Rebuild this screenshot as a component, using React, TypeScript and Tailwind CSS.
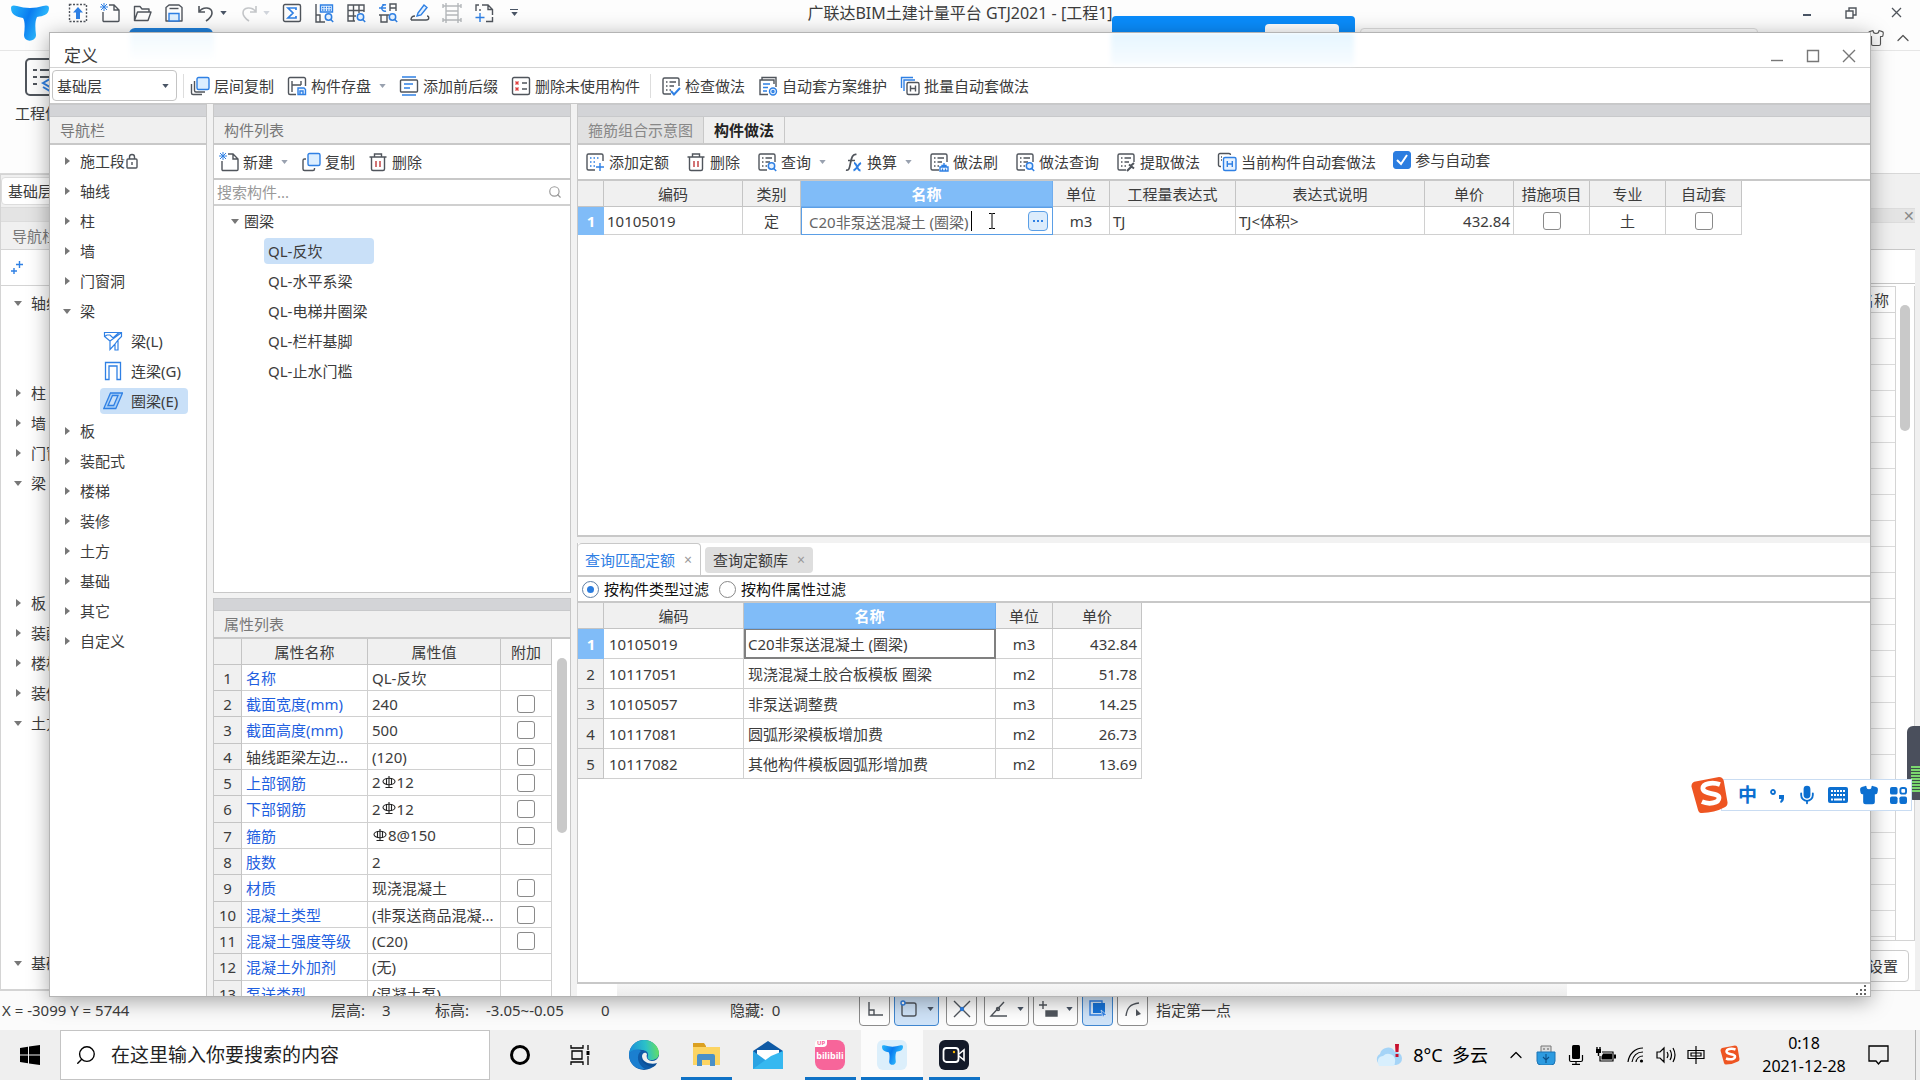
import { useState, type ReactNode } from "react";
import clsx from "clsx";
import { ChevronUp, Mic, Search, Shirt } from "lucide-react";

const DARK = "#50555c";
const BLUE = "#2f80e4";

function Svg({ children, className = "w-5 h-5", box = "0 0 20 20" }: { children: ReactNode; className?: string; box?: string }) {
  return (
    <svg viewBox={box} className={clsx("shrink-0", className)} fill="none" stroke={DARK} strokeWidth="1.4" aria-hidden="true">
      {children}
    </svg>
  );
}

function Arrow({ className }: { className?: string }) {
  return (
    <svg viewBox="0 0 8 5" className={clsx("h-1 w-[7px] shrink-0", className ?? "fill-gray-600")} aria-hidden="true">
      <path d="M0 0h8L4 5z" />
    </svg>
  );
}

function TreeArrow({ open }: { open?: boolean }) {
  return (
    <svg viewBox="0 0 10 10" className="h-[10px] w-[10px] shrink-0 fill-[#777]" aria-hidden="true">
      {open ? <path d="M1 3h8L5 8z" /> : <path d="M3 1l5 4-5 4z" />}
    </svg>
  );
}

/* Icons */

const MagnifierBadge = () => (
  <g stroke={BLUE} strokeWidth="1.5">
    <circle cx="14.5" cy="14" r="3.2" fill="#e6f2ff" />
    <path d="M16.8 16.4l2.4 2.6" />
  </g>
);

const DocLines = () => (
  <>
    <path d="M18 10V3.5A1.5 1.5 0 0016.5 2h-13A1.5 1.5 0 002 3.5v13A1.5 1.5 0 003.5 18H10" />
    <path d="M5 6h1.5M8.5 6H15M5 10h1.5M8.5 10H13M5 14h1.5M8.5 14H10" />
  </>
);

const UploadIcon = () => (
  <Svg>
    <rect x="1.5" y="1.5" width="17" height="17" strokeDasharray="2 1.5" />
    <path d="M10 4l5 5.5h-3V16H8V9.5H5z" fill={BLUE} stroke="none" />
  </Svg>
);
const NewIcon = () => (
  <Svg>
    <path d="M9 2h5l5 5v10.5a1 1 0 01-1 1H4a1 1 0 01-1-1V9M14 2v5h5" />
    <path d="M1 1l6 6M7 1L1 7M4 0v8M0 4h8" stroke={BLUE} strokeWidth="1" />
  </Svg>
);
const OpenIcon = () => (
  <Svg>
    <path d="M2.5 17.5V3.5H8L10 6h7v3M2.5 17.5L5.5 9H19l-3 8.5z" strokeLinejoin="round" />
  </Svg>
);
const SaveIcon = () => (
  <Svg>
    <path d="M2 4.5L5 2h10l3 2.5V18H2z" strokeLinejoin="round" />
    <path d="M5.5 5.5h9" />
    <path d="M5 18v-7.5h10V18z" stroke={BLUE} fill="#e0f0ff" />
  </Svg>
);
const UndoIcon = () => (
  <Svg>
    <path d="M3 3v6h6M3 9c4-6 13-5 13 1 0 4-3 6-6 8" strokeWidth="1.6" />
  </Svg>
);
const RedoIcon = () => (
  <Svg>
    <path d="M17 3v6h-6M17 9C13 3 4 4 4 10c0 4 3 6 6 8" stroke="#c4c6c9" strokeWidth="1.6" />
  </Svg>
);
const SumIcon = () => (
  <Svg>
    <rect x="1.5" y="1.5" width="17" height="17" rx="1.5" />
    <path d="M14 7V5H6l5 5-5 5h8v-2" stroke={BLUE} strokeWidth="1.7" />
  </Svg>
);
const ReportFindIcon = () => (
  <Svg>
    <path d="M2 1v18h9M2 12h4v7" />
    <path d="M6.5 2h12v7h-12z" stroke={BLUE} fill="#e6f2ff" />
    <path d="M8 4.5h9M8 7h9" stroke={BLUE} strokeDasharray="1.5 1" />
    <MagnifierBadge />
  </Svg>
);
const GridFindIcon = () => (
  <Svg>
    <path d="M9 18H2V2h16v7M2 7.5h16M2 13h8M7.5 2v16M13 2v8" />
    <MagnifierBadge />
  </Svg>
);
const SwapFindIcon = () => (
  <Svg>
    <path d="M12 8V1h6v7M12 5h6M3 12v7h6v-7M1 12h10" />
    <path d="M8 2a3.200 3.200 0 100 6M1 5h7M5 1v2" stroke={BLUE} />
    <MagnifierBadge />
  </Svg>
);
const PenIcon = () => (
  <Svg>
    <path d="M1 17h15c4 0 3-4 1-4M1 17c0-3 2-4 4-4" />
    <path d="M8 10l6-8 3 2.500-6 7.500-4 1z" stroke={BLUE} fill="#e6f2ff" />
  </Svg>
);
const FrameIcon = () => (
  <Svg>
    <path d="M4 0v20M16 0v20M1 3h18M4 8h12M4 12h12M1 17h18M1 1v4M19 1v4M1 15v4M19 15v4" stroke="#b5b8bb" />
  </Svg>
);
const AddPageIcon = () => (
  <Svg>
    <path d="M2 8V2h3M8 2h6l4.500 4.500V12M18.500 14v4.500H12M14 2v4.500h4.500M6 6v2" />
    <path d="M6 10v9M1.500 14.500h9" stroke={BLUE} />
  </Svg>
);
const LayersIcon = ({ triple }: { triple?: boolean }) => (
  <Svg>
    <rect x="7" y="1.500" width="12" height="12" rx="1.500" stroke={BLUE} fill="#dceeff" />
    {triple ? (
      <path d="M4.500 5v9.500A1.500 1.500 0 006 16h9M1.500 8v9a1.500 1.500 0 001.500 1.500h9" />
    ) : (
      <path d="M5 7H3.500A1.500 1.500 0 002 8.500V17a1.500 1.500 0 001.500 1.500H12a1.500 1.500 0 001.500-1.500v-1" />
    )}
  </Svg>
);
const StoreIcon = () => (
  <Svg>
    <path d="M18.500 10V3A1.500 1.500 0 0017 1.500H3A1.500 1.500 0 001.500 3v14A1.500 1.500 0 003 18.500h6" />
    <path d="M5 5v11M5 9h9M14 5v4" />
    <path d="M11 12h6l1.500 1.500v5H11zM13 18v-3h3v3" stroke={BLUE} fill="#e6f2ff" />
  </Svg>
);
const AffixIcon = () => (
  <Svg>
    <path d="M3 1h14M3 19h14" stroke={BLUE} />
    <rect x="1.500" y="4" width="17" height="12" rx="1" />
    <path d="M5 8h9M5 12h6" stroke={BLUE} strokeWidth="1.600" />
  </Svg>
);
const RemoveUnusedIcon = () => (
  <Svg>
    <rect x="1.500" y="1.500" width="17" height="17" rx="1.500" />
    <path d="M4.500 5.500l3 3M7.500 5.500l-3 3M4.500 11.500l3 3M7.500 11.500l-3 3" stroke="#e03c3c" />
    <path d="M11 7h5M11 13h5" />
  </Svg>
);
const CheckDocIcon = () => (
  <Svg>
    <DocLines />
    <path d="M10 15l3 3.500 6-6.500" stroke={BLUE} strokeWidth="2" />
  </Svg>
);
const PlanIcon = () => (
  <Svg>
    <path d="M4 4V1.500h14V11M16 8V4H2v14.500h8" />
    <path d="M5 8h7M5 11.500h5M5 15h4" stroke={BLUE} />
    <circle cx="15" cy="15.500" r="3.500" stroke={BLUE} fill="#e6f2ff" />
    <circle cx="15" cy="15.500" r="1" stroke={BLUE} />
  </Svg>
);
const BatchIcon = () => (
  <Svg>
    <path d="M1.500 12V1.500H13M4 15V4h11" stroke={BLUE} />
    <rect x="7" y="6.500" width="12" height="12" rx="1.500" />
    <path d="M10.500 9.500v6M15.500 9.500v6M10.500 12.500h5" />
  </Svg>
);
const CurrentBatchIcon = () => (
  <Svg>
    <path d="M4 14.500H3A1.500 1.500 0 011.500 13V3A1.500 1.500 0 013 1.500h9A1.500 1.500 0 0113.500 3M4 5h1M4 8h1" />
    <rect x="6.500" y="5.500" width="12.500" height="13" rx="1.500" stroke={BLUE} fill="#e6f2ff" />
    <path d="M10.300 9v6M15.300 9v6M10.300 12h5" stroke={BLUE} />
  </Svg>
);
const TrashIcon = () => (
  <Svg>
    <path d="M1.500 5h17M6.500 5V2h7v3M3.500 5v12A1.500 1.500 0 005 18.500h10a1.500 1.500 0 001.500-1.500V5" />
    <path d="M8 9v6M12 9v6" stroke="#c0393b" />
  </Svg>
);
const AddQuotaIcon = () => (
  <Svg>
    <path d="M18 9V3.500A1.500 1.500 0 0016.500 2h-13A1.500 1.500 0 002 3.500v13A1.500 1.500 0 003.500 18H10" />
    <path d="M5 6h10M5 10h7M5 14h5" strokeDasharray="1.500 2" stroke={BLUE} />
    <path d="M15 11v8M11 15h8" stroke={BLUE} />
  </Svg>
);
const QueryIcon = () => (
  <Svg>
    <DocLines />
    <MagnifierBadge />
  </Svg>
);
const BrushIcon = () => (
  <Svg>
    <DocLines />
    <path d="M11 19v-4h8v4zM13 15v-1.500h4V15M15 11v2M13.500 19v-2.500M16.500 19v-2.500" stroke={BLUE} />
  </Svg>
);
const ExtractIcon = () => (
  <Svg>
    <DocLines />
    <path d="M11 19l4-4M13 12.500l5 4M18 11l-4 3.500" strokeWidth="2" />
  </Svg>
);
const FxIcon = () => (
  <Svg>
    <path d="M3 18c3 1 3.500-2 4.500-7S9.500 1.500 13.500 2.500M5 8.500h7" strokeWidth="1.700" />
    <path d="M11 11c3 0 3 7.500 6.500 7.500M18 11c-3 1-4 6.500-7.500 7.500" stroke={BLUE} strokeWidth="1.900" />
  </Svg>
);
const BeamIcon = () => (
  <Svg>
    <path d="M1.500 1.500h17v4L15 9v10h-3v-6l-5 5.500V10L1.500 5.500zM1.500 5.500L4 4h3l3 3 6-5.500M7 10l11-8M12 13l3-4" stroke={BLUE} strokeWidth="1.200" />
  </Svg>
);
const LinkBeamIcon = () => (
  <Svg>
    <path d="M2.500 18.500V1.500h15v17H14V5H6v13.500z" stroke={BLUE} strokeWidth="1.300" />
  </Svg>
);
const RingBeamIcon = () => (
  <Svg>
    <path d="M.8 17.500L7.500 2h12l-6.700 15.500zM5 14.500L9.500 4.500H15L10.700 14.500z" stroke={BLUE} fill="#a9cff7" fillRule="evenodd" strokeWidth="1.300" />
  </Svg>
);

// HRB400 rebar grade mark
const Rebar = () => (
  <Svg className="mx-px mb-1 inline-block h-[13px] w-[14px]" box="0 0 14 13">
    <ellipse cx="7" cy="5.500" rx="6" ry="3.300" stroke="#222" strokeWidth="1.100" />
    <path d="M7 0v12M4.500 2v7M9.500 2v7M3.500 11.500h7" stroke="#222" strokeWidth="1.100" />
  </Svg>
);

const TLogo = ({ className }: { className: string }) => (
  <svg viewBox="0 0 38 36" className={clsx("shrink-0", className)} aria-hidden="true">
    <defs>
      <linearGradient id="t" x1="0" y1="0" x2="1" y2="0.400">
        <stop offset="0" stopColor="#27b7fb" />
        <stop offset="0.500" stopColor="#0a7cf0" />
        <stop offset="1" stopColor="#35c6ff" />
      </linearGradient>
    </defs>
    <path d="M0 3C0 0 3 0 6 1c8 2.500 18 2.500 26 0 3-1 6-1 6 2 0 7-6 8-12 9-2 4-2 10-1 18 0 7-12 8-12 0 1-8 1-14-1-17C6 12 0 10 0 3z" fill="url(#t)" />
  </svg>
);

const SogouLogo = ({ className }: { className: string }) => (
  <svg viewBox="0 0 40 40" className={clsx("shrink-0", className)} aria-hidden="true">
    <path d="M4 6L30 1q4 0 5 4l4 23q0 4-3 5-11 6-24 6-3 0-4-3L1 11q0-4 3-5z" fill="#ee5522" />
    <path d="M31 9c-8-3-18-1-18 4 0 7 17 4 17 10 0 6-11 7-18 4" fill="none" stroke="#fff" strokeWidth="5" />
  </svg>
);

/* Shared bits */

function Check({ label, defaultChecked }: { label: string; defaultChecked?: boolean }) {
  return (
    <span className="inline-grid place-items-center align-middle">
      <input
        type="checkbox"
        aria-label={label}
        defaultChecked={defaultChecked}
        className="peer col-start-1 row-start-1 h-[18px] w-[18px] appearance-none rounded-[3px] border border-[#8a8a8a] bg-white checked:border-[#2b7de0] checked:bg-[#2b7de0]"
      />
      <svg viewBox="0 0 18 18" className="pointer-events-none col-start-1 row-start-1 hidden h-[18px] w-[18px] peer-checked:block" aria-hidden="true">
        <path d="M4 9l4 4 6-9" fill="none" stroke="#fff" strokeWidth="2" />
      </svg>
    </span>
  );
}

function ToolButton({ icon, label, menu }: { icon: ReactNode; label: string; menu?: boolean }) {
  return (
    <button type="button" className="flex shrink-0 items-center gap-1 whitespace-nowrap">
      {icon}
      {label}
      {menu && <Arrow className="ml-1 fill-gray-400" />}
    </button>
  );
}

function PanelHeader({ title }: { title: string }) {
  return (
    <>
      <div className="h-[13px] shrink-0 border-y border-[#c8c9cb] bg-[#d3d4d7]" />
      <h2 className="flex h-[28px] shrink-0 items-center border-b-2 border-[#c8c8c8] bg-[#f0f0f0] px-[10px] text-[#777]">{title}</h2>
    </>
  );
}

const cell = "border-r border-b border-[#d0d0d0]";
const headCell = "border-r border-b border-[#c4c4c4] bg-[#f0f0f0] font-normal";

/* Main window, mostly covered by the definition dialog */

const quickTools: { label: string; icon: ReactNode; menu?: string }[] = [
  { label: "上传", icon: <UploadIcon /> },
  { label: "新建", icon: <NewIcon /> },
  { label: "打开", icon: <OpenIcon /> },
  { label: "保存", icon: <SaveIcon /> },
  { label: "撤销", icon: <UndoIcon />, menu: "fill-gray-600" },
  { label: "恢复", icon: <RedoIcon />, menu: "fill-gray-300" },
  { label: "汇总计算", icon: <SumIcon /> },
  { label: "查看报表", icon: <ReportFindIcon /> },
  { label: "查看工程量", icon: <GridFindIcon /> },
  { label: "查看钢筋量", icon: <SwapFindIcon /> },
  { label: "编辑", icon: <PenIcon /> },
  { label: "轴网", icon: <FrameIcon /> },
  { label: "添加", icon: <AddPageIcon /> },
];

function AppHeader() {
  return (
    <header className="relative h-[51px] shrink-0 border-b border-[#e6e6e6] bg-[#fdfdfd]">
      <TLogo className="absolute top-[5px] left-[11px] h-9 w-[38px]" />
      <div className="grid h-[25px] grid-cols-[1fr_auto_1fr] items-center">
        <div className="flex items-center gap-3 pl-[68px]">
          {quickTools.map((t) => (
            <button key={t.label} type="button" aria-label={t.label} className="flex items-center gap-1">
              {t.icon}
              {t.menu && <Arrow className={t.menu} />}
            </button>
          ))}
          <button type="button" aria-label="自定义快速访问" className="ml-1 flex flex-col items-center gap-0.5">
            <span className="h-px w-2 bg-gray-600" />
            <Arrow />
          </button>
        </div>
        <h1 className="text-base">广联达BIM土建计量平台 GTJ2021 - [工程1]</h1>
        <div className="flex items-center justify-end gap-[34px] pr-[18px]">
          <button type="button" aria-label="最小化" className="mt-1 h-0.5 w-2 bg-gray-600" />
          <button type="button" aria-label="还原">
            <Svg className="h-3 w-3" box="0 0 12 12">
              <path d="M1 4h7v7H1zM4 4V1h7v7H8" />
            </Svg>
          </button>
          <button type="button" aria-label="关闭">
            <Svg className="h-[11px] w-[11px]" box="0 0 11 11">
              <path d="M1 1l9 9M10 1l-9 9" strokeWidth="1.300" />
            </Svg>
          </button>
        </div>
      </div>
      <div className="flex h-6 items-start pt-[3px] pr-[7px] pl-[129px]">
        <div className="h-[22px] w-[84px] rounded-t-md bg-[#1f7fd8]" />
        <div className="mr-[109px] ml-auto h-5 w-[398px] rounded border border-[#ddd]" />
        <div className="flex items-center gap-2">
          <Shirt className="h-[18px] w-[18px] text-[#555]" strokeWidth={1.5} />
          <ChevronUp className="h-5 w-5 text-[#555]" strokeWidth={1.5} />
        </div>
      </div>
      <div className="absolute top-4 right-[565px] flex h-8 w-[243px] justify-end rounded bg-[#0a8cfb] pt-2 pr-4">
        <div className="h-5 w-[74px] rounded bg-white" />
      </div>
    </header>
  );
}

// null keeps the space of rows that lie behind the dialog
const mainTree: ([string, boolean?] | null)[] = [
  ["轴线", true], null, null, ["柱"], ["墙"], ["门窗洞"], ["梁", true], null, null, null,
  ["板"], ["装配式"], ["楼梯"], ["装修"], ["土方", true], null, null, null, null, null, null, null,
  ["基础", true],
];

function MainWindow() {
  return (
    <div className="flex min-h-0 flex-1 flex-col">
      <AppHeader />
      <div className="flex h-[123px] shrink-0 border-b border-[#d8d8d8] bg-[#fdfdfd] pt-[7px] pl-[15px]">
        <div className="flex flex-col items-center gap-[7px]">
          <Svg className="h-[38px] w-10" box="0 0 40 38">
            <rect x="1" y="1" width="38" height="36" rx="4" strokeWidth="2" />
            <path d="M8 12h4M15 12h16M8 19h4M15 19h12M8 26h4" strokeWidth="2" />
            <path d="M18 25l7-4 7 4-7 4zM18 29l7 4 7-4" stroke={BLUE} strokeWidth="2" />
          </Svg>
          <span>工程信息</span>
        </div>
      </div>
      <div className="flex min-h-0 flex-1 justify-between bg-[#f0f0f0]">
        <div className="flex w-[207px] flex-col overflow-hidden border border-[#d4d4d4]">
          <div className="mt-0.5 flex h-7 w-32 shrink-0 items-center rounded border border-[#ddd] bg-white pl-[6px]">基础层</div>
          <div className="mt-0.5 h-[15px] shrink-0 border-y border-[#dcdcdc] bg-[#e4e4e4]" />
          <div className="flex h-7 shrink-0 items-center border-b border-[#d4d4d4] pl-[11px] text-[#777]">导航栏</div>
          <div className="flex h-9 shrink-0 items-center border-b border-[#d4d4d4] bg-white pl-[10px]">
            <Svg className="h-[14px] w-3" box="0 0 12 14">
              <path d="M8.500 0v7M5 3.500h7M3 7v6M0 10h6" stroke={BLUE} />
            </Svg>
          </div>
          <ul className="min-h-0 flex-1 bg-white pt-[2px]">
            {mainTree.map((row, i) => (
              <li key={i} className="flex h-[30px] items-center gap-2 pl-3">
                {row && (
                  <>
                    <TreeArrow open={row[1]} />
                    {row[0]}
                  </>
                )}
              </li>
            ))}
          </ul>
        </div>
        <div className="flex w-24 flex-col pt-[34px] pr-[5px]">
          <div className="flex h-[15px] shrink-0 items-center justify-end border-y border-[#dcdcdc] bg-[#e4e4e4]">
            <button type="button" aria-label="关闭面板" className="text-sm leading-3 text-[#888]">✕</button>
          </div>
          <div className="h-[26px] shrink-0" />
          <div className="h-[35px] shrink-0 border-y border-[#c8c8c8] bg-white" />
          <div className="flex min-h-0 flex-1 bg-white pt-[2px]">
            <div className="flex-1 overflow-hidden border-r border-[#d4d4d4]">
              <div className="flex h-[27px] items-center justify-end border-y border-[#d4d4d4] pr-[6px]">属性名称</div>
              {Array.from({ length: 24 }, (_, i) => (
                <div key={i} className="h-[26px] border-b border-[#dcdcdc]" />
              ))}
            </div>
            <div className="w-[19px] border-r border-[#d4d4d4] px-1 pt-[19px]">
              <div className="h-[126px] rounded-full bg-[#c9c9c9]" />
            </div>
          </div>
          <div className="flex h-[50px] shrink-0 items-center justify-end border-t border-[#d4d4d4] bg-white pr-[6px]">
            <button type="button" className="h-8 rounded border border-[#ccc] px-[10px]">设置</button>
          </div>
        </div>
      </div>
      <StatusBar />
    </div>
  );
}

function StatusBar() {
  const btn = "flex h-[34px] items-center justify-center gap-2 rounded border px-1";
  const plain = "border-[#8c8c8c] bg-white";
  const active = "border-[#3f86cf] bg-[#cfe3f8]";
  return (
    <div className="flex h-[40px] shrink-0 items-start border-t border-[#d4d4d4] bg-[#fbfbfb]">
      <div className="flex h-[38px] w-[859px] items-center pl-[2px]">
        <span className="w-[329px]">X = -3099 Y = 5744</span>
        <span className="w-[51px]">层高:</span>
        <span className="w-[53px]">3</span>
        <span className="w-[51px]">标高:</span>
        <span className="w-[115px]">-3.05~-0.05</span>
        <span className="w-[129px]">0</span>
        <span>隐藏:&nbsp;&nbsp;0</span>
      </div>
      <div className="flex gap-1 pt-px">
        <button type="button" aria-label="正交" className={clsx(btn, plain, "w-[31px]")}>
          <Svg><path d="M4 3v13h14M4 11h5v5" /></Svg>
        </button>
        <button type="button" aria-label="捕捉" className={clsx(btn, active, "w-[45px]")}>
          <Svg><rect x="3" y="4" width="14" height="13" rx="2" /><circle cx="4" cy="4" r="2" stroke={BLUE} fill="#fff" /></Svg>
          <Arrow />
        </button>
        <button type="button" aria-label="交点" className={clsx(btn, plain, "ml-[3px] w-[31px]")}>
          <Svg><path d="M2 2l16 16M18 2L2 18" /><circle cx="10" cy="10" r="1.500" stroke={BLUE} fill={BLUE} /></Svg>
        </button>
        <button type="button" aria-label="角度" className={clsx(btn, plain, "ml-[3px] w-[45px]")}>
          <Svg><path d="M18 17H2L15 3" /><circle cx="9" cy="10" r="1.500" /></Svg>
          <Arrow />
        </button>
        <button type="button" aria-label="偏移" className={clsx(btn, plain, "w-[45px]")}>
          <Svg><path d="M5 2v8M1 6h8" /><path d="M8 12h11v5H8z" fill={DARK} /></Svg>
          <Arrow />
        </button>
        <button type="button" aria-label="选择" className={clsx(btn, active, "w-[31px]")}>
          <Svg><path d="M2 2h12v14H2z" stroke={BLUE} /><path d="M5 4h12v10H5z" fill="#1673d8" stroke="none" /><path d="M13 11l6 5-3 .500-1 3z" fill={BLUE} stroke="#fff" strokeWidth=".600" /></Svg>
        </button>
        <button type="button" aria-label="弧线" className={clsx(btn, plain, "w-[31px]")}>
          <Svg><path d="M3 17C4 9 7 5 16 4" /><path d="M13 10l5 5-5 2z" fill={DARK} stroke="none" /></Svg>
        </button>
      </div>
      <span className="pt-[9px] pl-2">指定第一点</span>
    </div>
  );
}

/* Definition dialog */

type NavRow = { name: string; open?: boolean; locked?: boolean; icon?: ReactNode; child?: boolean };

const navRows: NavRow[] = [
  { name: "施工段", locked: true },
  { name: "轴线" },
  { name: "柱" },
  { name: "墙" },
  { name: "门窗洞" },
  { name: "梁", open: true },
  { name: "梁(L)", child: true, icon: <BeamIcon /> },
  { name: "连梁(G)", child: true, icon: <LinkBeamIcon /> },
  { name: "圈梁(E)", child: true, icon: <RingBeamIcon /> },
  { name: "板" },
  { name: "装配式" },
  { name: "楼梯" },
  { name: "装修" },
  { name: "土方" },
  { name: "基础" },
  { name: "其它" },
  { name: "自定义" },
];

function NavPanel() {
  const [active, setActive] = useState("圈梁(E)");
  return (
    <section className="flex w-[157px] shrink-0 flex-col border-r border-[#c8c8c8] bg-white">
      <PanelHeader title="导航栏" />
      <ul className="pt-px">
        {navRows.map((row) => (
          <li key={row.name} className="flex h-[30px] items-center">
            {row.child ? (
              <button
                type="button"
                onClick={() => setActive(row.name)}
                className={clsx("ml-[50px] flex h-[26px] items-center gap-2 rounded pr-[10px] pl-[3px]", active === row.name && "bg-[#c9e0f8]")}
              >
                {row.icon}
                {row.name}
              </button>
            ) : (
              <button type="button" className="ml-3 flex items-center gap-2">
                <TreeArrow open={row.open} />
                <span className="flex items-center">
                  {row.name}
                  {row.locked && (
                    <Svg className="h-4 w-[14px]" box="0 0 14 16">
                      <rect x="2" y="6" width="10" height="9" rx="1" />
                      <path d="M4.500 6V4a2.500 2.500 0 015 0v2M7 9v3" />
                    </Svg>
                  )}
                </span>
              </button>
            )}
          </li>
        ))}
      </ul>
    </section>
  );
}

const components = ["QL-反坎", "QL-水平系梁", "QL-电梯井圈梁", "QL-栏杆基脚", "QL-止水门槛"];

function ComponentPanel() {
  const [active, setActive] = useState(components[0]);
  return (
    <section className="flex h-[489px] shrink-0 flex-col border border-t-0 border-[#c8c8c8] bg-white">
      <PanelHeader title="构件列表" />
      <div className="flex h-[35px] shrink-0 items-center gap-[13px] border-b-2 border-[#c8c8c8] pl-[5px]">
        <ToolButton icon={<NewIcon />} label="新建" menu />
        <ToolButton icon={<LayersIcon />} label="复制" />
        <ToolButton icon={<TrashIcon />} label="删除" />
      </div>
      <label className="flex h-[26px] shrink-0 items-center border-b-2 border-[#d0d0d0] pr-2 pl-[3px]">
        <input type="search" aria-label="搜索构件" placeholder="搜索构件..." className="min-w-0 flex-1 outline-none placeholder:text-[#999]" />
        <Search className="h-[14px] w-[14px] text-[#999]" />
      </label>
      <div className="flex h-[30px] items-center gap-1 pl-4">
        <TreeArrow open />
        圈梁
      </div>
      <ul>
        {components.map((name) => (
          <li key={name} className="flex h-[30px] items-center">
            <button
              type="button"
              onClick={() => setActive(name)}
              className={clsx("ml-[50px] h-[26px] w-[110px] rounded pl-1 text-left whitespace-nowrap", active === name && "bg-[#c9e0f8]")}
            >
              {name}
            </button>
          </li>
        ))}
      </ul>
    </section>
  );
}

const properties: { name: string; value: ReactNode; check?: boolean; plain?: boolean }[] = [
  { name: "名称", value: "QL-反坎" },
  { name: "截面宽度(mm)", value: "240", check: true },
  { name: "截面高度(mm)", value: "500", check: true },
  { name: "轴线距梁左边...", value: "(120)", check: true, plain: true },
  { name: "上部钢筋", value: <>2<Rebar />12</>, check: true },
  { name: "下部钢筋", value: <>2<Rebar />12</>, check: true },
  { name: "箍筋", value: <><Rebar />8@150</>, check: true },
  { name: "肢数", value: "2" },
  { name: "材质", value: "现浇混凝土", check: true },
  { name: "混凝土类型", value: "(非泵送商品混凝...", check: true },
  { name: "混凝土强度等级", value: "(C20)", check: true },
  { name: "混凝土外加剂", value: "(无)" },
  { name: "泵送类型", value: "(混凝土泵)" },
];

function PropertyPanel() {
  return (
    <section className="flex min-h-0 flex-1 flex-col overflow-hidden border-x border-[#c8c8c8] bg-white">
      <PanelHeader title="属性列表" />
      <div className="flex min-h-0 flex-1 overflow-hidden">
        <table className="w-[338px] table-fixed border-separate border-spacing-0 self-start whitespace-nowrap">
          <colgroup>
            <col className="w-[28px]" />
            <col className="w-[126px]" />
            <col className="w-[133px]" />
            <col className="w-[51px]" />
          </colgroup>
          <thead>
            <tr className="h-[26px]">
              <th className={headCell} aria-label="序号" />
              <th className={headCell}>属性名称</th>
              <th className={headCell}>属性值</th>
              <th className={headCell}>附加</th>
            </tr>
          </thead>
          <tbody>
            {properties.map((p, i) => (
              <tr key={p.name} className="h-[26px] nth-[3n]:h-[27px]">
                <th scope="row" className={headCell}>{i + 1}</th>
                <td className={clsx(cell, "pl-1", !p.plain && "text-[#1f5fe0]")}>{p.name}</td>
                <td className={clsx(cell, "pl-1")}>{p.value}</td>
                <td className={clsx(cell, "text-center leading-none")}>{p.check && <Check label={`${p.name}附加`} />}</td>
              </tr>
            ))}
          </tbody>
        </table>
        <div className="flex-1 pt-[19px] pl-[5px]">
          <div className="h-[175px] w-[10px] rounded-full bg-[#c9c9c9]" />
        </div>
      </div>
    </section>
  );
}

function MethodPanel() {
  const [name, setName] = useState("C20非泵送混凝土 (圈梁)");
  return (
    <section className="flex h-[433px] shrink-0 flex-col border-b-2 border-l border-[#c8c8c8] bg-white">
      <div className="h-[13px] shrink-0 border-y border-[#c8c9cb] bg-[#d3d4d7]" />
      <div role="tablist" className="flex h-[28px] shrink-0 border-b-2 border-[#c8c8c8] bg-[#f0f0f0]">
        <button type="button" role="tab" aria-selected="false" className="w-[126px] border-r border-[#c8c8c8] bg-[#e1e1e1] text-[#888]">箍筋组合示意图</button>
        <button type="button" role="tab" aria-selected="true" className="w-[81px] border-r border-[#c8c8c8] font-bold text-[#222]">构件做法</button>
      </div>
      <div className="flex h-[36px] shrink-0 items-center gap-[17px] border-b-2 border-[#c8c8c8] pl-[7px]">
        <ToolButton icon={<AddQuotaIcon />} label="添加定额" />
        <ToolButton icon={<TrashIcon />} label="删除" />
        <ToolButton icon={<QueryIcon />} label="查询" menu />
        <ToolButton icon={<FxIcon />} label="换算" menu />
        <ToolButton icon={<BrushIcon />} label="做法刷" />
        <ToolButton icon={<QueryIcon />} label="做法查询" />
        <ToolButton icon={<ExtractIcon />} label="提取做法" />
        <ToolButton icon={<CurrentBatchIcon />} label="当前构件自动套做法" />
        <label className="flex items-center gap-1 pb-1">
          <Check label="参与自动套" defaultChecked />
          参与自动套
        </label>
      </div>
      <table className="w-[1164px] table-fixed border-separate border-spacing-0 whitespace-nowrap">
        <colgroup>
          <col className="w-[26px]" />
          <col className="w-[139px]" />
          <col className="w-[58px]" />
          <col className="w-[252px]" />
          <col className="w-[57px]" />
          <col className="w-[126px]" />
          <col className="w-[189px]" />
          <col className="w-[89px]" />
          <col className="w-[76px]" />
          <col className="w-[76px]" />
          <col className="w-[76px]" />
        </colgroup>
        <thead>
          <tr className="h-[26px]">
            <th className={headCell} aria-label="序号" />
            <th className={headCell}>编码</th>
            <th className={headCell}>类别</th>
            <th className="border-r border-b border-[#6fadef] bg-[#80bcf8] font-bold text-white">名称</th>
            <th className={headCell}>单位</th>
            <th className={headCell}>工程量表达式</th>
            <th className={headCell}>表达式说明</th>
            <th className={headCell}>单价</th>
            <th className={headCell}>措施项目</th>
            <th className={headCell}>专业</th>
            <th className={headCell}>自动套</th>
          </tr>
        </thead>
        <tbody>
          <tr className="h-[28px] text-center">
            <th scope="row" className="bg-[#80bcf8] font-bold text-white">1</th>
            <td className={clsx(cell, "pl-[3px] text-left")}>10105019</td>
            <td className={cell}>定</td>
            <td className="border border-[#5b9fe6] p-0">
              <div className="relative flex items-center">
                <input
                  aria-label="名称"
                  value={name}
                  onChange={(e) => setName(e.target.value)}
                  className="h-[26px] min-w-0 flex-1 bg-white pl-[7px] text-[#666] outline-none"
                />
                <span className="absolute left-[169px] h-5 w-px bg-black" />
                <Svg className="absolute left-[186px] h-4 w-2" box="0 0 8 16">
                  <path d="M1 .500h2.500L4 1l.500-.500H7M4 1v14M1 15.500h2.500L4 15l.500.500H7" stroke="#000" strokeWidth="1" />
                </Svg>
                <button type="button" aria-label="选择名称" className="mr-1 flex h-5 w-5 items-center justify-center gap-0.5 rounded border border-[#5b9fe6] bg-[#dcecfc]">
                  <i className="h-0.5 w-0.5 bg-[#2f80e4]" />
                  <i className="h-0.5 w-0.5 bg-[#2f80e4]" />
                  <i className="h-0.5 w-0.5 bg-[#2f80e4]" />
                </button>
              </div>
            </td>
            <td className={cell}>m3</td>
            <td className={clsx(cell, "pl-[3px] text-left")}>TJ</td>
            <td className={clsx(cell, "pl-[3px] text-left")}>TJ&lt;体积&gt;</td>
            <td className={clsx(cell, "pr-[3px] text-right")}>432.84</td>
            <td className={clsx(cell, "leading-none")}><Check label="措施项目" /></td>
            <td className={cell}>土</td>
            <td className={clsx(cell, "leading-none")}><Check label="自动套" /></td>
          </tr>
        </tbody>
      </table>
    </section>
  );
}

const quotas = [
  ["10105019", "C20非泵送混凝土 (圈梁)", "m3", "432.84"],
  ["10117051", "现浇混凝土胶合板模板 圈梁", "m2", "51.78"],
  ["10105057", "非泵送调整费", "m3", "14.25"],
  ["10117081", "圆弧形梁模板增加费", "m2", "26.73"],
  ["10117082", "其他构件模板圆弧形增加费", "m2", "13.69"],
];

function QuotaPanel() {
  const radio = "h-[17px] w-[17px] appearance-none rounded-full border border-[#888] bg-white bg-clip-content p-1 checked:border-[#5f7fa5] checked:bg-[#2b7de0]";
  return (
    <section className="flex min-h-0 flex-1 flex-col border-b-2 border-l border-[#c8c8c8] bg-white">
      <div role="tablist" className="flex h-[34px] shrink-0 items-center gap-1 border-b-2 border-[#c8c8c8]">
        <div className="flex h-8 items-center gap-[9px] rounded-t border-t border-r border-[#c8c8c8] pr-2 pl-[7px]">
          <button type="button" role="tab" aria-selected="true" className="text-[#2f80e4]">查询匹配定额</button>
          <button type="button" aria-label="关闭查询匹配定额" className="text-sm leading-4 text-[#999]">×</button>
        </div>
        <div className="mt-0.5 flex h-[26px] items-center gap-[9px] rounded-sm bg-[#dedede] px-2">
          <button type="button" role="tab" aria-selected="false">查询定额库</button>
          <button type="button" aria-label="关闭查询定额库" className="text-sm leading-4 text-[#999]">×</button>
        </div>
      </div>
      <div className="flex h-[26px] shrink-0 items-center gap-[10px] border-b-2 border-[#c8c8c8] pl-1 text-[#111]">
        <label className="flex items-center gap-[5px]">
          <input type="radio" name="filter" defaultChecked className={radio} />
          按构件类型过滤
        </label>
        <label className="flex items-center gap-[5px]">
          <input type="radio" name="filter" className={radio} />
          按构件属性过滤
        </label>
      </div>
      <table className="w-[564px] table-fixed border-separate border-spacing-0 whitespace-nowrap">
        <colgroup>
          <col className="w-[26px]" />
          <col className="w-[140px]" />
          <col className="w-[252px]" />
          <col className="w-[57px]" />
          <col className="w-[89px]" />
        </colgroup>
        <thead>
          <tr className="h-[26px]">
            <th className={headCell} aria-label="序号" />
            <th className={headCell}>编码</th>
            <th className="border-r border-b border-[#6fadef] bg-[#80bcf8] font-bold text-white">名称</th>
            <th className={headCell}>单位</th>
            <th className={headCell}>单价</th>
          </tr>
        </thead>
        <tbody>
          {quotas.map(([code, name, unit, price], i) => (
            <tr key={code} className="h-[30px]">
              <th scope="row" className={i === 0 ? "bg-[#80bcf8] font-bold text-white" : headCell}>{i + 1}</th>
              <td className={clsx(cell, "pl-[5px]")}>{code}</td>
              <td className={i === 0 ? "border-2 border-t border-[#808080] pl-[2px]" : clsx(cell, "pl-1")}>{name}</td>
              <td className={clsx(cell, "text-center")}>{unit}</td>
              <td className={clsx(cell, "pr-1 text-right")}>{price}</td>
            </tr>
          ))}
        </tbody>
      </table>
    </section>
  );
}

function DefinitionDialog() {
  return (
    <div
      role="dialog"
      aria-label="定义"
      className="absolute top-8 right-[49px] bottom-[83px] left-[49px] flex flex-col overflow-hidden border border-[#b4b4b4] bg-[#f2f2f2] shadow-[0_4px_20px_rgba(0,0,0,0.35)]"
    >
      <div className="relative flex h-[35px] shrink-0 items-center justify-between border-b border-[#d4d4d4] bg-white pt-3 pr-[14px] pl-[14px]">
        <div className="absolute top-0 left-20 h-7 w-[84px] bg-linear-to-b from-[#f1f9fe] to-white blur-[2px]" />
        <div className="absolute top-0 right-[516px] h-8 w-[243px] bg-linear-to-b from-[#e6f6ff] to-[#f8fcff] blur-[2px]" />
        <span className="text-[17px]">定义</span>
        <div className="flex items-center gap-[22px]">
          <button type="button" aria-label="最小化"><Svg className="h-[14px] w-[14px]" box="0 0 14 14"><path d="M1 11.500h12" stroke="#777" /></Svg></button>
          <button type="button" aria-label="最大化"><Svg className="h-[14px] w-[14px]" box="0 0 14 14"><path d="M1.500 1.500h11v11h-11z" stroke="#777" /></Svg></button>
          <button type="button" aria-label="关闭"><Svg className="h-[14px] w-[14px]" box="0 0 14 14"><path d="M1 1l12 12M13 1L1 13" stroke="#777" /></Svg></button>
        </div>
      </div>
      <div className="flex h-9 shrink-0 items-center gap-[13px] border-b border-[#c8c8c8] bg-white pl-[2px]">
        <div className="relative flex items-center">
          <select aria-label="楼层" className="h-[31px] w-[125px] appearance-none rounded border border-[#c4c4c4] bg-white pl-1">
            <option>基础层</option>
          </select>
          <Arrow className="pointer-events-none absolute right-2 fill-gray-600" />
        </div>
        <span className="-mx-[7px] h-6 w-px bg-[#ddd]" />
        <ToolButton icon={<LayersIcon triple />} label="层间复制" />
        <ToolButton icon={<StoreIcon />} label="构件存盘" menu />
        <ToolButton icon={<AffixIcon />} label="添加前后缀" />
        <ToolButton icon={<RemoveUnusedIcon />} label="删除未使用构件" />
        <span className="-mx-[3px] h-6 w-px bg-[#ddd]" />
        <ToolButton icon={<CheckDocIcon />} label="检查做法" />
        <ToolButton icon={<PlanIcon />} label="自动套方案维护" />
        <ToolButton icon={<BatchIcon />} label="批量自动套做法" />
      </div>
      <div className="flex min-h-0 flex-1 gap-[6px]">
        <NavPanel />
        <div className="flex w-[358px] shrink-0 flex-col gap-[5px]">
          <ComponentPanel />
          <PropertyPanel />
        </div>
        <div className="flex min-w-0 flex-1 flex-col">
          <MethodPanel />
          <div className="h-[6px] shrink-0" />
          <QuotaPanel />
          <div className="flex h-3 shrink-0 items-center justify-between bg-white pr-1 pl-10">
            <div className="h-full w-[950px] bg-linear-to-b from-[#f6f6f6] to-[#ececec]" />
            <svg viewBox="0 0 10 10" className="h-[10px] w-[10px] fill-[#666]" aria-hidden="true">
              <path d="M8 0h2v2H8zM4 4h2v2H4zM8 4h2v2H8zM0 8h2v2H0zM4 8h2v2H4zM8 8h2v2H8z" />
            </svg>
          </div>
        </div>
      </div>
    </div>
  );
}

/* Desktop overlays */

function SogouBar() {
  return (
    <>
      <div className="absolute top-[726px] right-0 h-[74px] w-[13px] rounded-l-md bg-[#4a4f5c] pt-10 pl-1">
        <div className="h-[26px] bg-[repeating-linear-gradient(#7bd86f_0_2px,#3c5148_2px_3px)]" />
      </div>
      <div className="absolute top-[775px] right-[8px] flex h-[40px] items-center text-[#0c6fd0]">
        <SogouLogo className="relative z-10 h-[38px] w-[39px]" />
        <div className="-ml-2 flex h-8 items-center gap-[11px] border border-[#c9dcf2] bg-white pr-1 pl-4">
          <span className="text-[19px] leading-5 font-bold">中</span>
          <svg viewBox="0 0 18 18" className="h-[18px] w-[18px] fill-current" aria-hidden="true">
            <circle cx="5" cy="6" r="2" fill="none" stroke="currentColor" strokeWidth="1.800" />
            <path d="M11 9h5v3c0 2-1 4-3 5l-1-1 1.500-3H11z" />
          </svg>
          <Mic className="h-5 w-5 [&>rect]:fill-current" strokeWidth={2.2} />
          <svg viewBox="0 0 20 16" className="h-4 w-5 fill-current" aria-hidden="true">
            <path d="M2 0h16a2 2 0 012 2v12a2 2 0 01-2 2H2a2 2 0 01-2-2V2a2 2 0 012-2z" />
            <path d="M3 4h14M3 8h14" stroke="#fff" strokeWidth="2.200" strokeDasharray="2 1" />
            <path d="M3 12.500h2M6 12.500h8M15 12.500h2" stroke="#fff" strokeWidth="2" />
          </svg>
          <Shirt className="h-5 w-5 fill-current" />
          <svg viewBox="0 0 18 18" className="h-[17px] w-[17px] fill-current" aria-hidden="true">
            <rect width="8" height="8" rx="2" />
            <rect y="10" width="8" height="8" rx="2" />
            <rect x="10" y="10" width="8" height="8" rx="2" />
            <rect x="11" y="1" width="6" height="6" rx="2" fill="none" stroke="currentColor" strokeWidth="2" />
          </svg>
        </div>
      </div>
    </>
  );
}

const EdgeIcon = () => (
  <svg viewBox="0 0 30 30" className="h-[30px] w-[30px]" aria-hidden="true">
    <defs>
      <linearGradient id="edge" x1="0" y1="0.300" x2="1" y2="0.200">
        <stop offset="0" stopColor="#1a8fd8" />
        <stop offset="0.550" stopColor="#2bc0c9" />
        <stop offset="1" stopColor="#6be15a" />
      </linearGradient>
    </defs>
    <circle cx="15" cy="15" r="15" fill="#0f5ba8" />
    <path d="M0 14C1 5 8 0 15 0c9 0 15 7 15 13 0 5-4 7-7 7-4 0-5-2-4-4 1-4-3-6-6-6C7 9 2 11 0 14z" fill="url(#edge)" />
    <path d="M12 15c0 6 6 9 11 9 2 0 4-1 5-1-1 2-2 3-4 4-8-1-13-6-12-12z" fill="#0d4f96" />
    <path d="M18 14c-1 3 0 7 5 7 3 0 6-2 7-5 1 3 0 6-2 7-5 2-15 0-15-7 0-2 3-5 5-2z" fill="#efefef" />
    <path d="M0 14c2-4 8-6 12-3-5 4-4 13 4 18C7 30 0 24 0 14z" fill="#1b7fd0" />
  </svg>
);

const taskApps: { name: string; icon: ReactNode; bar?: string; active?: boolean }[] = [
  { name: "Edge", icon: <EdgeIcon /> },
  {
    name: "文件资源管理器",
    bar: "w-[51px]",
    icon: (
      <svg viewBox="0 0 30 30" className="h-[30px] w-[30px]" aria-hidden="true">
        <path d="M2 3h11l2 3v5H2z" fill="#dba021" />
        <path d="M2 7h27v18H2z" fill="#fcd462" />
        <path d="M6 26V16q0-2 2-2h14q2 0 2 2v10h-5v-6h-8v6z" fill="#4a90c8" />
      </svg>
    ),
  },
  {
    name: "邮件",
    icon: (
      <svg viewBox="0 0 30 30" className="h-[30px] w-[30px]" aria-hidden="true">
        <path d="M0 11L15 1l15 10v5H0z" fill="#0f5aa5" />
        <path d="M4 10h22v10H4z" fill="#fff" />
        <path d="M0 11l15 11L30 11v18H0z" fill="#2aa3e3" />
        <path d="M0 29l18-13 12-5v18z" fill="#36b8f0" />
      </svg>
    ),
  },
  {
    name: "哔哩哔哩",
    bar: "w-[51px]",
    icon: (
      <span className="relative flex h-[30px] w-[30px] items-center justify-center rounded-lg bg-[#f7659a] text-[9px] leading-none font-bold text-white">
        bilibili
        <span className="absolute top-0 left-0 rounded-tl rounded-br bg-white px-0.5 text-[6px] leading-[7px] text-[#f7659a]">UP</span>
      </span>
    ),
  },
  {
    name: "GTJ2021",
    bar: "w-[62px]",
    active: true,
    icon: (
      <span className="flex h-[30px] w-[30px] items-center justify-center rounded-md bg-[#dceffb]">
        <TLogo className="h-5 w-[21px]" />
      </span>
    ),
  },
  {
    name: "录屏",
    bar: "w-[51px]",
    icon: (
      <svg viewBox="0 0 30 30" className="h-[30px] w-[30px]" fill="none" aria-hidden="true">
        <rect width="30" height="30" rx="6" fill="#141a29" />
        <rect x="4.500" y="8" width="15" height="14" rx="3" stroke="#fff" strokeWidth="1.800" />
        <path d="M20 14l5-4v10l-5-4" stroke="#fff" strokeWidth="1.600" />
        <circle cx="15" cy="12" r="1.200" fill="#f7b500" />
      </svg>
    ),
  },
];

function Taskbar() {
  return (
    <footer className="flex h-[50px] shrink-0 items-stretch bg-[#efefef] text-black">
      <button type="button" aria-label="开始" className="flex w-[60px] items-center justify-center">
        <svg viewBox="0 0 20 20" className="h-5 w-5" aria-hidden="true">
          <path d="M0 3l8-1.200V9.500H0zM9 1.600L20 0v9.500H9zM0 10.500h8v7.700L0 17zM9 10.500h11V20L9 18.400z" />
        </svg>
      </button>
      <label className="flex w-[430px] items-center gap-[14px] border border-[#c4c4c4] bg-white pl-[14px]">
        <Search className="h-[22px] w-[22px] -scale-x-100" strokeWidth={1.5} />
        <input aria-label="搜索" placeholder="在这里输入你要搜索的内容" className="min-w-0 flex-1 text-[19px] outline-none placeholder:text-[#222]" />
      </label>
      <button type="button" aria-label="Cortana" className="flex w-[60px] items-center justify-center">
        <i className="h-5 w-5 rounded-full border-[3px] border-black" />
      </button>
      <button type="button" aria-label="任务视图" className="flex w-[60px] items-center justify-center">
        <Svg className="h-5 w-[21px]" box="0 0 21 20">
          <path d="M1 0v3h12V0M1 20v-3h12v3M2 6h10v8H2zM18 0v5M18 11v9" stroke="#000" strokeWidth="1.300" />
          <path d="M16.500 6h3v4h-3z" fill="#000" stroke="none" />
        </Svg>
      </button>
      <div className="ml-[3px] flex">
        {taskApps.map((app) => (
          <button
            key={app.name}
            type="button"
            aria-label={app.name}
            className={clsx("flex w-[62px] flex-col items-center justify-between pt-[10px]", app.active && "bg-[#fbfbfb]")}
          >
            {app.icon}
            {app.bar && <i className={clsx("h-[3px] bg-[#0f72c6]", app.bar)} />}
          </button>
        ))}
      </div>
      <div className="ml-auto flex items-center gap-[10px] pr-1">
        <Svg className="h-[22px] w-7" box="0 0 28 22">
          <path d="M6 21a6 6 0 01-1-11 8 8 0 0115-2 6.500 6.500 0 011 13z" fill="#a5d4f7" stroke="none" />
          <path d="M3 18a5 5 0 015-6 7 7 0 0112 6 8 8 0 01-17 0z" fill="#d8effd" stroke="none" />
          <path d="M20 0h4l-.500 8h-3zM20.500 10h3v3h-3z" fill="#c8102e" stroke="none" />
        </Svg>
        <span className="pr-2 text-[18px] leading-6">8°C&nbsp; 多云</span>
        <ChevronUp className="h-5 w-5" strokeWidth={1.5} />
        <Svg className="h-5 w-5">
          <path d="M5 1h10v7H5z" fill="#ddd" stroke="#777" strokeWidth="1" />
          <path d="M7.500 4h1M11.500 4h1" stroke="#333" />
          <path d="M1 7h18v9q0 4-4 4H5q-4 0-4-4z" fill="#2d9be0" stroke="#1d74b4" strokeWidth="1" />
          <path d="M10 9v9M7 12l3 3 3-3" stroke="#0c4f88" strokeWidth="1.100" />
        </Svg>
        <Svg className="h-5 w-5">
          <rect x="6" y="0" width="8" height="14" rx="1.500" fill="#000" stroke="none" />
          <path d="M3.500 10v5q0 1.500 1.500 1.500h10q1.500 0 1.500-1.500v-5M10 16v3M6 19.300h8" stroke="#000" strokeWidth="1.200" />
        </Svg>
        <Svg className="h-5 w-5">
          <path d="M6 7h11v9H4v-5" stroke="#000" strokeWidth="1.200" />
          <path d="M7 8.500h9v6H5.500v-3zM18 9.500h2v4h-2zM0 4h5v4H0z" fill="#000" stroke="none" />
          <path d="M1 2v2M4 2v2M2.500 7v4" stroke="#000" />
        </Svg>
        <Svg className="h-5 w-5">
          <path d="M2 17C3 9 9 3 17 3M6 17C7 11 11 7 17 7M10 17c.500-3 3-6 7-6" stroke="#000" strokeWidth="1.200" />
          <circle cx="15.500" cy="16" r="1.600" fill="#000" stroke="none" />
        </Svg>
        <Svg className="h-5 w-5">
          <path d="M1 7h3l4-4v14l-4-4H1zM11 7q2 3 0 6M14 5q3 5 0 10M17 3q4 7 0 14" stroke="#000" strokeWidth="1.200" />
        </Svg>
        <Svg className="h-5 w-5">
          <path d="M2 5.500h16v8H2zM10 1v18M5 8h10v3H5z" stroke="#000" strokeWidth="1.200" />
        </Svg>
        <SogouLogo className="ml-1 h-5 w-5" />
        <div className="ml-1 w-[100px] text-center text-base leading-[23px]">
          <div>0:18</div>
          <div>2021-12-28</div>
        </div>
        <Svg className="mr-4 ml-1 h-[21px] w-[21px]" box="0 0 21 21">
          <path d="M1 1h19v15h-7l-2.500 3L8 16H1z" stroke="#000" strokeWidth="1.300" />
        </Svg>
        <span className="h-[50px] w-px bg-[#b4b4b4]" />
      </div>
    </footer>
  );
}

export default function App() {
  return (
    <div className="relative flex h-screen flex-col overflow-hidden bg-white font-['Noto_Sans','Noto_Sans_CJK_SC',sans-serif] text-[15px] leading-5 text-[#3c3c3c]">
      <MainWindow />
      <DefinitionDialog />
      <SogouBar />
      <Taskbar />
    </div>
  );
}
